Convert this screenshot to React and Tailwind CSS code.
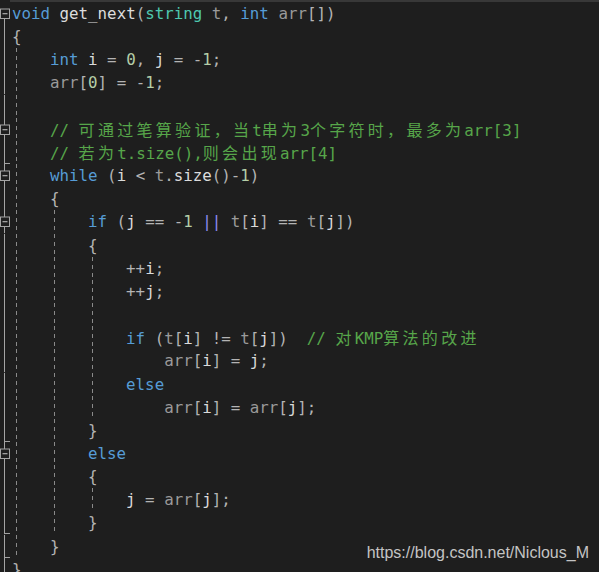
import React from 'react';

const colors = {
  K: 'text-[#569cd6]',
  F: 'text-[#dcdcdc]',
  T: 'text-[#4ec9b0]',
  P: 'text-[#9a9a9a]',
  V: 'text-[#dadada]',
  N: 'text-[#b5cea8]',
  O: 'text-[#b4b4b4]',
  C: 'text-[#57a64a]',
  X: 'text-[#8c8cf0]',
};

// [guides, extra indent chars, tokens]
const lines = [
  [0, 0, [['K', 'void'], ['O', ' '], ['F', 'get_next'], ['O', '('], ['T', 'string'], ['O', ' '], ['P', 't'], ['O', ', '], ['K', 'int'], ['O', ' '], ['P', 'arr'], ['O', '[])']]],
  [0, 0, [['O', '{']]],
  [1, 0, [['K', 'int'], ['O', ' '], ['V', 'i'], ['O', ' = '], ['N', '0'], ['O', ', '], ['V', 'j'], ['O', ' = -'], ['N', '1'], ['O', ';']]],
  [1, 0, [['P', 'arr'], ['O', '['], ['N', '0'], ['O', '] = -'], ['N', '1'], ['O', ';']]],
  [1, 0, []],
  [1, 0, [['C', '// 可通过笔算验证，当t串为3个字符时，最多为arr[3]']]],
  [1, 0, [['C', '// 若为t.size(),则会出现arr[4]']]],
  [1, 0, [['K', 'while'], ['O', ' ('], ['V', 'i'], ['O', ' < '], ['P', 't'], ['O', '.'], ['F', 'size'], ['O', '()-'], ['N', '1'], ['O', ')']]],
  [1, 0, [['O', '{']]],
  [2, 0, [['K', 'if'], ['O', ' ('], ['V', 'j'], ['O', ' == -'], ['N', '1'], ['O', ' '], ['X', '||'], ['O', ' '], ['P', 't'], ['O', '['], ['V', 'i'], ['O', '] == '], ['P', 't'], ['O', '['], ['V', 'j'], ['O', '])']]],
  [2, 0, [['O', '{']]],
  [3, 0, [['O', '++'], ['V', 'i'], ['O', ';']]],
  [3, 0, [['O', '++'], ['V', 'j'], ['O', ';']]],
  [3, 0, []],
  [3, 0, [['K', 'if'], ['O', ' ('], ['P', 't'], ['O', '['], ['V', 'i'], ['O', '] != '], ['P', 't'], ['O', '['], ['V', 'j'], ['O', '])  '], ['C', '// 对KMP算法的改进']]],
  [3, 4, [['P', 'arr'], ['O', '['], ['V', 'i'], ['O', '] = '], ['V', 'j'], ['O', ';']]],
  [3, 0, [['K', 'else']]],
  [3, 4, [['P', 'arr'], ['O', '['], ['V', 'i'], ['O', '] = '], ['P', 'arr'], ['O', '['], ['V', 'j'], ['O', '];']]],
  [2, 0, [['O', '}']]],
  [2, 0, [['K', 'else']]],
  [2, 0, [['O', '{']]],
  [3, 0, [['V', 'j'], ['O', ' = '], ['P', 'arr'], ['O', '['], ['V', 'j'], ['O', '];']]],
  [2, 0, [['O', '}']]],
  [1, 0, [['O', '}']]],
  [0, 0, [['O', '}']]],
];

const boxes = [0, 5, 7, 9, 19];
const ticks = [6, 18, 22, 23, 24];

function Gutter({ index }) {
  const box = boxes.includes(index);
  const tick = ticks.includes(index);
  return (
    <svg width="10" height="23.17" viewBox="0 0 10 23.17" className="shrink-0">
      <line x1="4.5" x2="4.5" y1={index === 0 ? 16 : 0} y2="23.17" stroke="#a5a5a5" strokeWidth="1" />
      {tick && <line x1="4.5" x2="10" y1="22.5" y2="22.5" stroke="#a5a5a5" strokeWidth="1" />}
      {box && (
        <g>
          <rect x="0.5" y="7" width="9" height="9.5" fill="#1e1e1e" stroke="#a5a5a5" strokeWidth="1" />
          <line x1="2.5" x2="7.5" y1="11.75" y2="11.75" stroke="#c8c8c8" strokeWidth="1" />
        </g>
      )}
    </svg>
  );
}

function Text({ text }) {
  // CJK glyphs take two columns, as in the editor
  const parts = text.split(/([\u3000-\u9fff\uff00-\uffef]+)/);
  return parts.map((p, i) =>
    /[\u3000-\u9fff\uff00-\uffef]/.test(p) ? (
      <span key={i} className="font-['Noto_Sans_CJK_SC',sans-serif] text-[16px] tracking-[3.3px]">
        {p}
      </span>
    ) : (
      <span key={i}>{p}</span>
    )
  );
}

function Line({ index, guides, extra, tokens }) {
  return (
    <div className="flex h-[23.17px] leading-[23.17px] whitespace-pre">
      <Gutter index={index} />
      <div className="flex pl-[2px]">
        {Array.from({ length: guides }).map((_, i) => (
          <div key={i} className="h-full w-[4ch] shrink-0 pl-[4px]">
            <div className="h-full w-px bg-[image:repeating-linear-gradient(to_bottom,#8a8a8a_0px,#8a8a8a_4px,transparent_4px,transparent_8px)]" />
          </div>
        ))}
        <span>
          {' '.repeat(extra)}
          {tokens.map(([c, t], i) => (
            <span key={i} className={colors[c]}>
              <Text text={t} />
            </span>
          ))}
        </span>
      </div>
    </div>
  );
}

export default function App() {
  return (
    <div className="relative h-[572px] w-[599px] overflow-hidden bg-[#1e1e1e] font-['DejaVu_Sans_Mono',monospace] text-[15.8px]">
      <div className="ml-[10px] h-[2px] bg-[#383838]" />
      {lines.map(([guides, extra, tokens], i) => (
        <Line key={i} index={i} guides={guides} extra={extra} tokens={tokens} />
      ))}

      {/* watermark */}
      <div className="absolute bottom-[11px] right-[10px] font-['Liberation_Sans',Arial,sans-serif] text-[16px] leading-none text-[#c4c4c4]">
        https://blog.csdn.net/Niclous_M
      </div>
    </div>
  );
}
